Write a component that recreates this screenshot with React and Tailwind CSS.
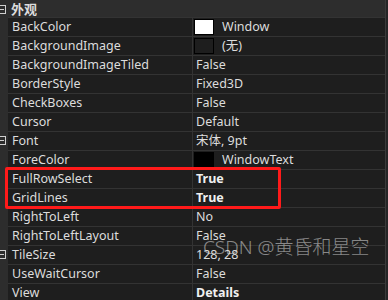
import React from "react";

const rows = [
  { n: "BackColor", v: "Window", sw: "white" },
  { n: "BackgroundImage", v: "(无)", sw: "dark" },
  { n: "BackgroundImageTiled", v: "False" },
  { n: "BorderStyle", v: "Fixed3D" },
  { n: "CheckBoxes", v: "False" },
  { n: "Cursor", v: "Default" },
  { n: "Font", v: "宋体, 9pt", exp: true },
  { n: "ForeColor", v: "WindowText", sw: "black" },
  { n: "FullRowSelect", v: "True", b: true },
  { n: "GridLines", v: "True", b: true },
  { n: "RightToLeft", v: "No" },
  { n: "RightToLeftLayout", v: "False" },
  { n: "TileSize", v: "128, 28", exp: true },
  { n: "UseWaitCursor", v: "False" },
  { n: "View", v: "Details", b: true },
];

function Box() {
  return (
    <div className="absolute left-[-3px] top-[5px] w-[9px] h-[9px] border border-[#d0d0d0] flex items-center justify-center">
      <div className="w-[5px] h-px bg-[#d0d0d0]" />
    </div>
  );
}

export default function App() {
  return (
    <div
      className="relative w-[388px] h-[300px] overflow-hidden bg-[#2d2d2d] text-[#dcdcdc] flex"
      style={{ fontFamily: '"Noto Sans", "Noto Sans CJK SC", sans-serif' }}
    >
      <div className="w-[385px] flex flex-col">
        <div className="relative h-[17px] flex items-center pl-[11px] pt-[1px] font-bold text-[13px]" style={{ fontFamily: '"Noto Sans CJK SC", sans-serif' }}>
          <Box />
          <span className="leading-[16px]">外观</span>
        </div>
        {rows.map((r) => (
          <div key={r.n} className="relative flex h-[19px] shrink-0 pl-[8px]">
            {r.exp && <Box />}
            <div className="flex w-full border-t border-[#333333]">
              <div className="w-[184px] shrink-0 bg-[#1e1e1e] pl-[4px] pt-[1px] flex items-center text-[12.5px] leading-none">
                {r.n}
              </div>
              <div className="w-px bg-[#333333]" />
              <div className={"flex-1 bg-[#1e1e1e] flex items-center text-[12.5px] leading-none " + (r.sw ? "pl-px" : "pl-[3px] pt-[1px]") + (r.b ? " font-bold text-[#f0f0f0]" : "")}>
                {r.sw && (
                  <div
                    className={
                      "w-[20px] h-[16px] border border-black mr-[8px] " +
                      (r.sw === "white" ? "bg-white" : r.sw === "black" ? "bg-black" : "bg-[#1e1e1e]")
                    }
                  />
                )}
                <span className={r.sw ? "pt-[1px]" : ""}>{r.v}</span>
              </div>
            </div>
          </div>
        ))}
      </div>
      <div className="w-px bg-[#3a3a3a]" />
      <div className="flex-1 bg-[#252526]" />
      <div className="absolute left-[5px] top-[167px] w-[276px] h-[42px] border-[3px] border-[#ff1a1a] rounded-[2px]" />
      <div
        className="absolute left-[203px] top-[238px] text-[19px] text-[#e6e6e6]/55 whitespace-nowrap leading-none"
        style={{ fontFamily: '"Noto Sans", "Noto Sans CJK SC", sans-serif', fontWeight: 300 }}
      >
        CSDN @黄昏和星空
      </div>
    </div>
  );
}
